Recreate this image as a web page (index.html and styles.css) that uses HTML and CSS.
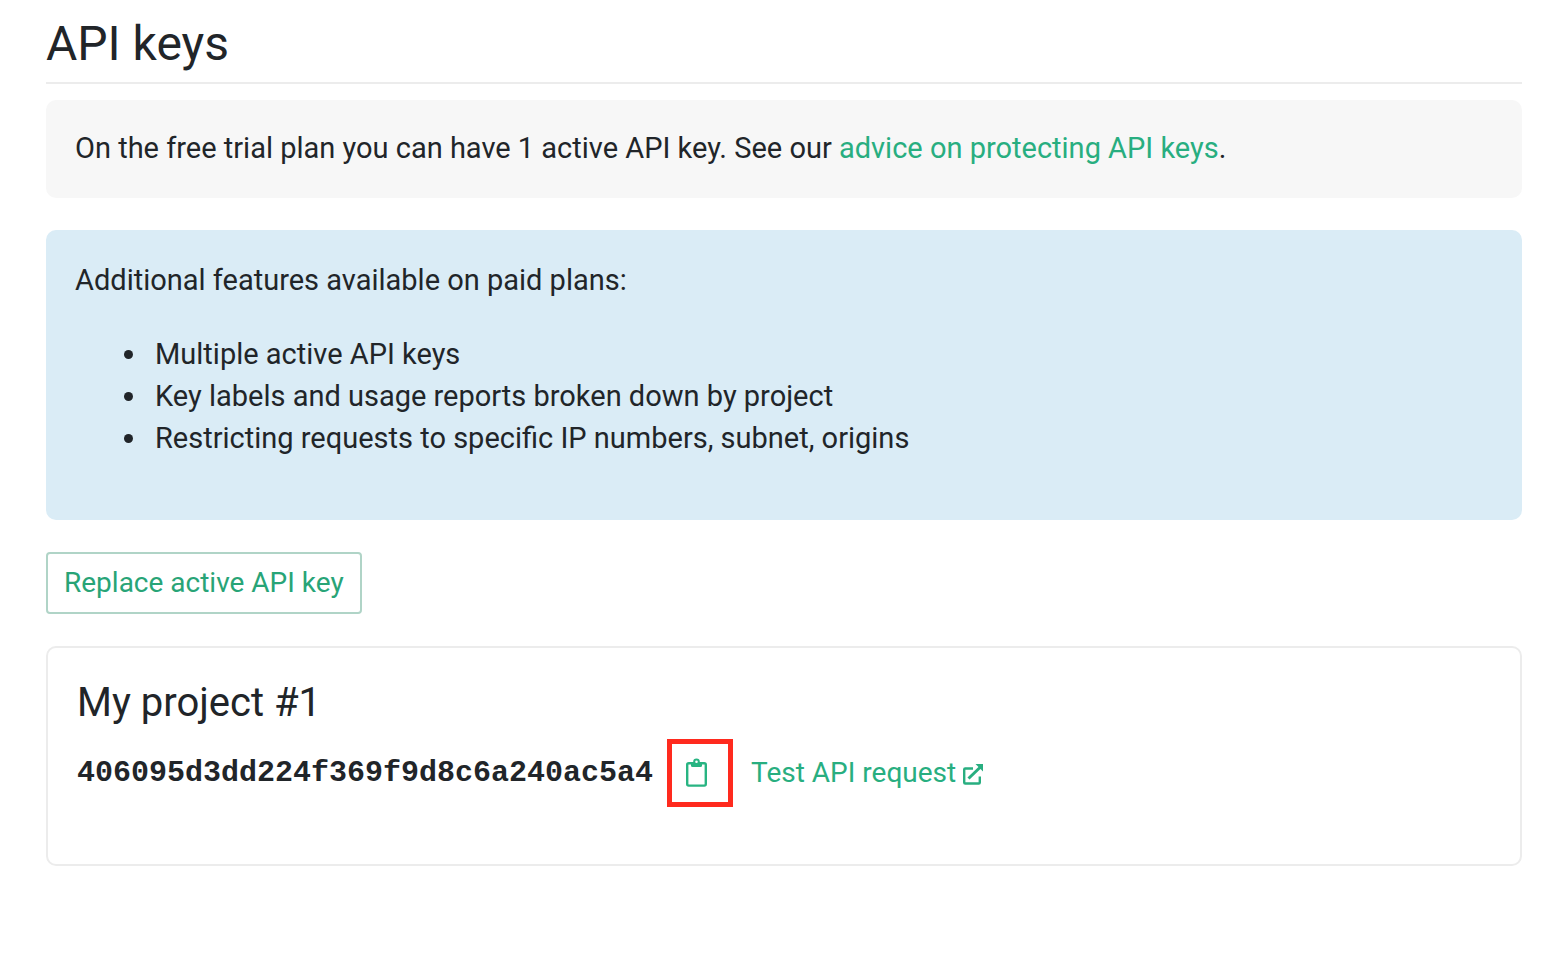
FILE: index.html
```html
<!DOCTYPE html>
<html lang="en">
<head>
<meta charset="utf-8">
<title>API keys</title>
<link rel="stylesheet" href="styles.css">
</head>
<body>
<main class="page">
  <h1 class="page-title">API keys</h1>
  <p class="notice">On the free trial plan you can have 1 active API key. See our <a href="#">advice on protecting API keys</a>.</p>
  <section class="features">
    <p class="features-intro">Additional features available on paid plans:</p>
    <ul class="features-list">
      <li>Multiple active API keys</li>
      <li>Key labels and usage reports broken down by project</li>
      <li>Restricting requests to specific IP numbers, subnet, origins</li>
    </ul>
  </section>
  <button class="replace" type="button">Replace active API key</button>
  <section class="project">
    <h2 class="project-title">My project #1</h2>
    <div class="key-row">
      <code class="key">406095d3dd224f369f9d8c6a240ac5a4</code>
      <button class="copy" type="button" aria-label="Copy API key">
        <svg width="22" height="30" viewBox="0 0 22 30" fill="none" stroke="currentColor"><rect x="1.2" y="5.2" width="18.600" height="22.400" rx="1.500" stroke-width="2.400"/><path d="M5 5h11v2.500q0 1.500-1.500 1.500h-8Q5 9 5 7.500z" fill="currentColor" stroke="none"/><circle cx="10.500" cy="3.800" r="2.300" fill="#fff" stroke-width="2"/></svg>
      </button>
      <a class="test" href="#">Test API request
        <svg width="22" height="22" viewBox="0 0 22 22" fill="none" stroke="currentColor" stroke-width="2.400"><path d="M10 4.500H2.200q-1 0-1 1v13q0 1 1 1h13.600q1 0 1-1V12.500"/><path d="M5.500 14.500 17.500 3" stroke-width="3"/><path d="M12.500 0h7.500v7.500z" fill="currentColor" stroke="none"/></svg>
      </a>
    </div>
  </section>
</main>
</body>
</html>
```
FILE: styles.css
```css
* { box-sizing: border-box; }
body { margin: 0; background: #fff; color: #212529; font: 29px/42px Roboto, sans-serif; }
a { color: #28ae80; text-decoration: none; }
.page { padding: 15px 44px 32px 46px; }
.page-title { margin: 0 0 16px; padding-bottom: 9px; border-bottom: 2px solid #ececec; font-size: 48px; line-height: 58px; font-weight: 400; }
.notice { margin: 0 0 32px; padding: 27px 29px 29px; border-radius: 10px; background: #f7f7f7; }
.features { margin-bottom: 32px; padding: 29px 29px 61px; border-radius: 10px; background: #daecf6; }
.features-intro { margin: 0 0 32px; }
.features-list { margin: 0; padding-left: 74px; }
.features-list li { padding-left: 6px; }
.replace { display: block; margin: 0 0 32px; padding: 8px 16px; border: 2px solid #b0d4c7; border-radius: 4px; background: #fff; color: #28a477; font: 28px/42px Roboto, sans-serif; }
.project { padding: 31px 29px 57px; border: 2px solid #ececec; border-radius: 10px; }
.project-title { margin: 0 0 12px; font-size: 40px; line-height: 48px; font-weight: 400; }
.key-row { display: flex; align-items: center; }
.key { font: bold 30px/42px "Liberation Mono", monospace; }
.copy { display: flex; align-items: center; justify-content: center; width: 66px; height: 68px; margin: 0 18px 0 14px; padding: 0 6px 0 0; border: 5px solid #ff2a1e; background: #fff; color: #28b482; }
.test { display: flex; align-items: center; gap: 7px; font-size: 28px; }
.test svg { margin-top: 4px; }
```
